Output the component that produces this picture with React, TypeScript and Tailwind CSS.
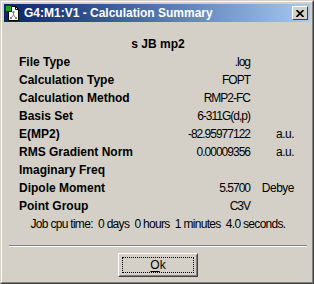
import React from 'react';

const rows: { label: string; value?: string; unit?: string }[] = [
  { label: 'File Type', value: '.log' },
  { label: 'Calculation Type', value: 'FOPT' },
  { label: 'Calculation Method', value: 'RMP2-FC' },
  { label: 'Basis Set', value: '6-311G(d,p)' },
  { label: 'E(MP2)', value: '-82.95977122', unit: 'a.u.' },
  { label: 'RMS Gradient Norm', value: '0.00009356', unit: 'a.u.' },
  { label: 'Imaginary Freq' },
  { label: 'Dipole Moment', value: '5.5700', unit: 'Debye' },
  { label: 'Point Group', value: 'C3V' },
];

function AppIcon() {
  return (
    <svg width="16" height="16" viewBox="0 0 16 16" className="shrink-0">
      <path d="M3.5 1.5h7l3 3v11h-10z" fill="#fff" stroke="#000" />
      <path d="M10.5 1.5v3h3" fill="none" stroke="#000" />
      <rect x="0.5" y="0.5" width="6" height="6" fill="#1fa21f" stroke="#0a3a0a" />
      <g stroke="#808080" strokeWidth="1" fill="none">
        <path d="M8.5 7v3M8.5 10l-2.5 3M8.5 10l2.5 3" />
      </g>
      <g fill="#808080">
        <rect x="7.5" y="6" width="2" height="2" />
        <rect x="5" y="12" width="2" height="2" />
        <rect x="10" y="12" width="2" height="2" />
      </g>
    </svg>
  );
}

export default function App() {
  return (
    <div
      className="w-[314px] h-[284px] border border-t-[#d4d0c8] border-l-[#d4d0c8] border-r-[#404040] border-b-[#404040] bg-[#d4d0c8] text-black"
      style={{ fontFamily: '"Liberation Sans", Arial, sans-serif' }}
    >
      <div className="h-full border border-t-white border-l-white border-r-[#808080] border-b-[#808080] p-[2px] flex flex-col">
        {/* title bar */}
        <div className="h-[18px] shrink-0 flex items-center bg-linear-to-r from-[#0a246a] to-[#a6caf0] pl-[1px] pr-[2px]">
          <AppIcon />
          <span className="ml-[3px] text-white font-bold text-[12px] leading-none whitespace-nowrap">
            G4:M1:V1 - Calculation Summary
          </span>
          <div className="ml-auto w-4 h-[14px] bg-[#d4d0c8] border border-t-white border-l-white border-r-[#404040] border-b-[#404040] flex items-center justify-center">
            <svg width="8" height="7" viewBox="0 0 8 7">
              <path d="M0.5 0l7 7M7.5 0l-7 7" stroke="#000" strokeWidth="1.6" />
            </svg>
          </div>
        </div>

        {/* body */}
        <div className="mt-[13px] flex flex-col">
          <div className="h-[18px] flex items-center justify-center font-bold text-[12px] pl-[2px]">s JB mp2</div>
          <div className="grid grid-cols-[1fr_auto_44px] pl-[15px] pr-[16px]">
            {rows.map((r) => (
              <React.Fragment key={r.label}>
                <div className="h-[18px] flex items-center font-bold text-[12px] whitespace-nowrap">{r.label}</div>
                <div className="h-[18px] flex items-center justify-end text-[12px] tracking-[-1px] whitespace-nowrap">
                  {r.value ?? ''}
                </div>
                <div className="h-[18px] flex items-center justify-end text-[12px] tracking-[-0.5px] whitespace-nowrap">
                  {r.unit ?? ''}
                </div>
              </React.Fragment>
            ))}
          </div>
          <div className="h-[18px] flex items-center justify-center text-[12px] tracking-[-0.7px] whitespace-pre pl-[2px]">
            {'Job cpu time:  0 days  0 hours  1 minutes  4.0 seconds.'}
          </div>
        </div>

        {/* separator */}
        <div className="mt-[12px] ml-[5px] mr-[3px] border-t border-t-[#808080] border-b border-b-white" />

        {/* button */}
        <div className="mt-[6px] flex justify-center pl-[2px]">
          <div className="w-20 h-6 border border-t-white border-l-white border-r-[#404040] border-b-[#404040]">
            <div className="h-full border border-t-[#d4d0c8] border-l-[#d4d0c8] border-r-[#808080] border-b-[#808080] p-[2px]">
              <div className="h-full border border-dotted border-black flex items-center justify-center text-[12px]">
                <span>
                  <span className="underline underline-offset-2">O</span>k
                </span>
              </div>
            </div>
          </div>
        </div>
      </div>
    </div>
  );
}
